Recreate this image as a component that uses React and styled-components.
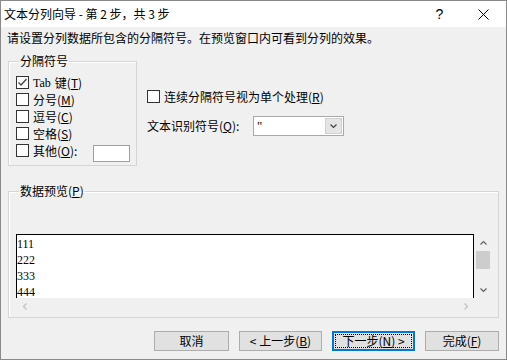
import React from 'react';
import styled, { createGlobalStyle } from 'styled-components';

const cjk = `"Noto Sans CJK SC", "Liberation Sans", sans-serif`;

const GlobalStyle = createGlobalStyle`
  html, body { margin: 0; padding: 0; background: #ffffff; }
  body { font-family: ${cjk}; font-size: 12px; }
  *, *::before, *::after { box-sizing: border-box; }
`;

const Window = styled.div`
  width: 507px;
  height: 360px;
  border: 1px solid #8a8a8a;
  background: #f0f0f0;
  display: flex;
  flex-direction: column;
  font-family: ${cjk};
  font-size: 12px;
  line-height: 14px;
  color: #000;
`;

const TitleBar = styled.div`
  height: 26px;
  background: #ffffff;
  display: flex;
  align-items: center;
  padding-left: 3px;
`;

const Title = styled.div`
  flex: 1;
  font-size: 12px;
  white-space: nowrap;
`;

const TitleButton = styled.div`
  width: ${(p) => p.$w}px;
  height: 26px;
  display: flex;
  align-items: center;
  justify-content: center;
  font-family: "Liberation Sans", sans-serif;
  font-size: 14px;
`;

const Body = styled.div`
  flex: 1;
  display: flex;
  flex-direction: column;
  padding: 4px 7px 0 7px;
`;

const Instruction = styled.div`
  height: 14px;
  margin-left: -1px;
  white-space: nowrap;
`;

const TopRow = styled.div`
  display: flex;
  align-items: flex-start;
  gap: 10px;
  margin-top: 9px;
`;

const Group = styled.fieldset`
  margin: 0;
  min-width: 0;
  border: 1px solid #d5d5d5;
  box-shadow: inset 1px 1px 0 #ffffff;
`;

const Legend = styled.legend`
  padding: 0 1px;
  margin-left: 3px;
  line-height: 14px;
  font-size: 12px;
`;

const DelimGroup = styled(Group)`
  width: 129px;
  padding: 6px 6px 6px 7px;
`;

const OptionRow = styled.div`
  display: flex;
  align-items: center;
  height: 17px;
  white-space: nowrap;
`;

const Box = styled.span`
  width: 13px;
  height: 13px;
  border: 1px solid #333333;
  background: #ffffff;
  margin-right: 4px;
  flex: none;
  display: flex;
  align-items: center;
  justify-content: center;
`;

const U = styled.span`
  text-decoration: underline;
`;

const Latin = styled.span`
  font-family: "Liberation Serif", serif;
  font-size: 12px;
  margin-right: 4px;
`;

const SmallInput = styled.div`
  width: 37px;
  height: 17px;
  margin-top: 6px;
  margin-left: auto;
  background: #ffffff;
  border: 1px solid #a0a0a0;
`;

const RightCol = styled.div`
  display: flex;
  flex-direction: column;
  gap: 11px;
  margin-top: 34px;
`;

const ComboRow = styled.div`
  display: flex;
  align-items: center;
  height: 20px;
`;

const ComboLabel = styled.span`
  width: 106px;
  white-space: nowrap;
`;

const Combo = styled.div`
  width: 91px;
  height: 20px;
  background: #ffffff;
  border: 1px solid #a9a9a9;
  display: flex;
`;

const ComboText = styled.div`
  flex: 1;
  padding-left: 3px;
  line-height: 18px;
  font-family: "Liberation Serif", serif;
  font-size: 13px;
`;

const ComboButton = styled.div`
  width: 17px;
  margin: 1px;
  background: #e5e5e5;
  border: 1px solid #d0d0d0;
  display: flex;
  align-items: center;
  justify-content: center;
`;

const PreviewGroup = styled(Group)`
  margin-top: 18px;
  padding: 36px 6px 2px 7px;
`;

const Preview = styled.div`
  width: 476px;
  height: 81px;
  display: grid;
  grid-template-columns: 1fr 18px;
  grid-template-rows: 64px 17px;
`;

const Viewport = styled.div`
  background: #ffffff;
  border: 1px solid #000000;
  border-bottom: none;
  overflow: hidden;
  padding-top: 1px;
  font-family: "Liberation Serif", serif;
  font-size: 12px;
  line-height: 16px;
`;

const Line = styled.div`
  height: 16px;
`;

const VScroll = styled.div`
  display: flex;
  flex-direction: column;
  background: #f0f0f0;
`;

const HScroll = styled.div`
  display: flex;
  background: #f0f0f0;
`;

const ArrowBtn = styled.div`
  flex: none;
  width: ${(p) => (p.$h ? 17 : 18)}px;
  height: 17px;
  display: flex;
  align-items: center;
  justify-content: center;
`;

const Track = styled.div`
  flex: 1;
  display: flex;
  flex-direction: ${(p) => (p.$h ? 'row' : 'column')};
`;

const Thumb = styled.div`
  width: 14px;
  height: 18px;
  margin-left: 2px;
  background: #cdcdcd;
`;

const Corner = styled.div`
  background: #f0f0f0;
`;

const ButtonRow = styled.div`
  display: flex;
  justify-content: flex-end;
  gap: 10px;
  margin-top: 13px;
`;

const Button = styled.div`
  width: ${(p) => p.$w}px;
  height: 20px;
  background: #e1e1e1;
  border: ${(p) => (p.$focus ? '2px solid #0078d7' : '1px solid #adadad')};
  display: flex;
  align-items: center;
  justify-content: center;
  white-space: nowrap;
  font-size: 12px;
  outline: ${(p) => (p.$focus ? '1px dotted #000' : 'none')};
  outline-offset: -4px;
`;

const Chevron = ({ dir, color = '#606060' }) => {
  const paths = {
    up: 'M0.5 4.5 L3.5 1.5 L6.5 4.5',
    down: 'M0.5 1.5 L3.5 4.5 L6.5 1.5',
    left: 'M4.5 0.5 L1.5 3.5 L4.5 6.5',
    right: 'M1.5 0.5 L4.5 3.5 L1.5 6.5',
  };
  const horiz = dir === 'left' || dir === 'right';
  return (
    <svg width={horiz ? 6 : 7} height={horiz ? 7 : 6} viewBox={horiz ? '0 0 6 7' : '0 0 7 6'}>
      <path d={paths[dir]} fill="none" stroke={color} strokeWidth="1.2" />
    </svg>
  );
};

const Check = () => (
  <svg width="11" height="11" viewBox="0 0 11 11">
    <path d="M1.5 5.5 L4 8 L9.5 2" fill="none" stroke="#444" strokeWidth="1.3" />
  </svg>
);

const Checkbox = ({ checked }) => <Box>{checked ? <Check /> : null}</Box>;

export default function App() {
  return (
    <>
      <GlobalStyle />
      <Window>
        <TitleBar>
          <Title>文本分列向导 - 第 2 步，共 3 步</Title>
          <TitleButton $w={41}>?</TitleButton>
          <TitleButton $w={46}>
            <svg width="11" height="11" viewBox="0 0 11 11">
              <path d="M0.5 0.5 L10.5 10.5 M10.5 0.5 L0.5 10.5" stroke="#000" strokeWidth="1" />
            </svg>
          </TitleButton>
        </TitleBar>
        <Body>
          <Instruction>请设置分列数据所包含的分隔符号。在预览窗口内可看到分列的效果。</Instruction>
          <TopRow>
            <DelimGroup>
              <Legend>分隔符号</Legend>
              <OptionRow>
                <Checkbox checked />
                <Latin>Tab</Latin>键(<U>T</U>)
              </OptionRow>
              <OptionRow>
                <Checkbox />
                分号(<U>M</U>)
              </OptionRow>
              <OptionRow>
                <Checkbox />
                逗号(<U>C</U>)
              </OptionRow>
              <OptionRow>
                <Checkbox />
                空格(<U>S</U>)
              </OptionRow>
              <OptionRow>
                <Checkbox />
                其他(<U>O</U>):
                <SmallInput />
              </OptionRow>
            </DelimGroup>
            <RightCol>
              <OptionRow>
                <Checkbox />
                连续分隔符号视为单个处理(<U>R</U>)
              </OptionRow>
              <ComboRow>
                <ComboLabel>
                  文本识别符号(<U>Q</U>):
                </ComboLabel>
                <Combo>
                  <ComboText>"</ComboText>
                  <ComboButton>
                    <Chevron dir="down" color="#404040" />
                  </ComboButton>
                </Combo>
              </ComboRow>
            </RightCol>
          </TopRow>
          <PreviewGroup>
            <Legend>
              数据预览(<U>P</U>)
            </Legend>
            <Preview>
              <Viewport>
                <Line>111</Line>
                <Line>222</Line>
                <Line>333</Line>
                <Line>444</Line>
              </Viewport>
              <VScroll>
                <ArrowBtn>
                  <Chevron dir="up" />
                </ArrowBtn>
                <Track>
                  <Thumb />
                </Track>
                <ArrowBtn>
                  <Chevron dir="down" />
                </ArrowBtn>
              </VScroll>
              <HScroll>
                <ArrowBtn $h>
                  <Chevron dir="left" color="#c0c0c0" />
                </ArrowBtn>
                <Track $h />
                <ArrowBtn $h>
                  <Chevron dir="right" color="#c0c0c0" />
                </ArrowBtn>
              </HScroll>
              <Corner />
            </Preview>
          </PreviewGroup>
          <ButtonRow>
            <Button $w={75}>取消</Button>
            <Button $w={83}>
              &lt; 上一步(<U>B</U>)
            </Button>
            <Button $w={83} $focus>
              下一步(<U>N</U>) &gt;
            </Button>
            <Button $w={74}>
              完成(<U>F</U>)
            </Button>
          </ButtonRow>
        </Body>
      </Window>
    </>
  );
}
